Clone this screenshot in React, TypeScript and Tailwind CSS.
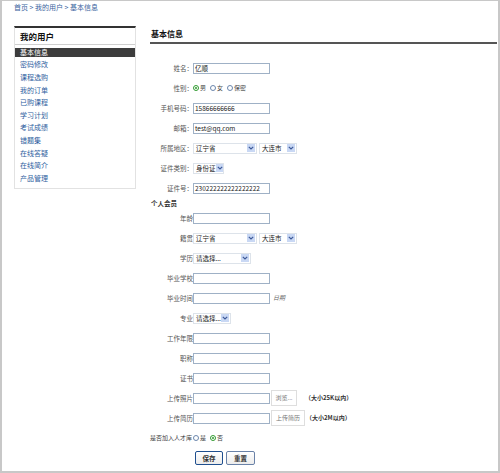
import React from "react";

const font = { fontFamily: '"Noto Sans CJK SC", "Noto Sans", sans-serif' };

function Input({ value = "", w = "w-[77px]" }: { value?: string; w?: string }) {
  return (
    <div className={`${w} h-[11px] border border-[#9fb1c6] bg-white flex items-center px-[1px] text-[6.5px] leading-none text-[#222] whitespace-nowrap overflow-hidden`}>
      {value}
    </div>
  );
}

function Select({ text, w }: { text: string; w: string }) {
  return (
    <div className={`${w} h-[11px] border border-[#dde3ea] bg-white flex items-center justify-between pl-[2px] pr-[1px] text-[6.5px] leading-none text-[#222] whitespace-nowrap overflow-hidden`}>
      <span className="whitespace-nowrap">{text}</span>
      <span className="w-[8px] h-[8px] shrink-0 bg-[#c9d8f4] flex items-center justify-center">
        <svg width="6" height="4" viewBox="0 0 6 4">
          <path d="M0.8 0.8 L3 3 L5.2 0.8" stroke="#3d5a99" strokeWidth="1.2" fill="none" />
        </svg>
      </span>
    </div>
  );
}

function Radio({ checked }: { checked?: boolean }) {
  return checked ? (
    <span className="w-[6px] h-[6px] rounded-full border border-[#2f9a2f] flex items-center justify-center bg-white">
      <span className="w-[2px] h-[2px] rounded-full bg-[#2f9a2f]" />
    </span>
  ) : (
    <span className="w-[6px] h-[6px] rounded-full border border-[#6b86ad] bg-white" />
  );
}

function Row({ label, children }: { label: string; children?: React.ReactNode }) {
  return (
    <div className="flex items-center h-[20px]">
      <div className="w-[43px] text-right text-[6.5px] leading-none text-[#555] whitespace-nowrap">{label}</div>
      <div className="flex items-center">{children}</div>
    </div>
  );
}

const menu = ["基本信息", "密码修改", "课程选购", "我的订单", "已购课程", "学习计划", "考试成绩", "错题集", "在线答疑", "在线简介", "产品管理"];

export default function App() {
  return (
    <div style={font} className="w-[500px] h-[473px] bg-white border-l-2 border-r-2 border-b-2 border-t border-[#c8c8c8] overflow-hidden">
      <div className="h-[12px] pl-[12px] text-[7px] leading-[12px] text-[#3a64a0]">
        首页 &gt; 我的用户 &gt; 基本信息
      </div>
      <div className="flex mt-[13px]">
        {/* sidebar */}
        <div className="ml-[12px] w-[122px] self-start border-t-2 border-[#333] border-l border-r border-b border-l-[#e2e2e2] border-r-[#e2e2e2] border-b-[#e2e2e2]">
          <div className="h-[17px] flex items-center pl-[5px] border-b border-[#cfcfcf] text-[8.5px] font-bold text-[#111]">我的用户</div>
          <div className="pt-[1px] pb-[3px]">
            {menu.map((m, i) => (
              <div key={m} className="h-[12.6px] flex items-center">
                {i === 0 ? (
                  <div className="w-full h-[9.5px] bg-[#3c3c3c] text-white text-[7px] leading-none flex items-center pl-[5px]">{m}</div>
                ) : (
                  <div className="text-[7px] leading-none text-[#2e5e9e] pl-[5px]">{m}</div>
                )}
              </div>
            ))}
          </div>
        </div>
        {/* main */}
        <div className="ml-[14px] w-[347px]">
          <div className="h-[16px] flex items-center text-[8px] font-bold text-[#111] pl-[1px]">基本信息</div>
          <div className="h-[2px] bg-[#555]" />
          <div className="pt-[14px]">
            <Row label="姓名："><Input value="亿顺" /></Row>
            <Row label="性别：">
              <div className="flex items-center gap-[1px] text-[6px] text-[#444] leading-none">
                <Radio checked /><span>男</span>
                <span className="w-[2px]" /><Radio /><span>女</span>
                <span className="w-[2px]" /><Radio /><span>保密</span>
              </div>
            </Row>
            <Row label="手机号码："><Input value="15866666666" /></Row>
            <Row label="邮箱："><Input value="test@qq.com" /></Row>
            <Row label="所属地区：">
              <div className="flex gap-[2px]"><Select text="辽宁省" w="w-[64px]" /><Select text="大连市" w="w-[38px]" /></div>
            </Row>
            <Row label="证件类别："><Select text="身份证" w="w-[31px]" /></Row>
            <Row label="证件号："><Input value="230222222222222222" /></Row>
            <div className="h-[10px] flex items-center text-[6.5px] font-bold text-[#333] leading-none pl-[1px]">个人会员</div>
            <Row label="年龄"><Input /></Row>
            <Row label="籍贯">
              <div className="flex gap-[2px]"><Select text="辽宁省" w="w-[64px]" /><Select text="大连市" w="w-[38px]" /></div>
            </Row>
            <Row label="学历"><Select text="请选择..." w="w-[58px]" /></Row>
            <Row label="毕业学校"><Input /></Row>
            <Row label="毕业时间">
              <Input />
              <span className="ml-[3px] text-[6px] italic text-[#666] leading-none">日期</span>
            </Row>
            <Row label="专业"><Select text="请选择..." w="w-[38px]" /></Row>
            <Row label="工作年限"><Input /></Row>
            <Row label="职称"><Input /></Row>
            <Row label="证书"><Input /></Row>
            <Row label="上传照片">
              <Input />
              <div className="ml-[1px] w-[26px] h-[16px] border border-[#dedede] bg-white flex items-center justify-center text-[6px] text-[#777] leading-none">浏览...</div>
              <span className="ml-[8px] text-[6px] font-bold text-[#333] leading-none">（大小25K以内）</span>
            </Row>
            <Row label="上传简历">
              <Input />
              <div className="ml-[1px] w-[34px] h-[16px] border border-[#dedede] bg-white flex items-center justify-center text-[6px] text-[#777] leading-none">上传简历</div>
              <span className="ml-[1px] text-[6px] font-bold text-[#333] leading-none">（大小2M以内）</span>
            </Row>
            <div className="h-[20px] flex items-center gap-[1px] text-[6px] text-[#444] leading-none">
              <span>是否加入人才库</span>
              <Radio /><span>是</span>
              <span className="w-[2px]" />
              <Radio checked /><span>否</span>
            </div>
            <div className="h-[20px] flex items-center pl-[45px] gap-[3px]">
              <div className="w-[28px] h-[14px] border border-[#1f4f8f] rounded-[2px] bg-gradient-to-b from-white to-[#ececec] flex items-center justify-center text-[6.5px] font-bold text-[#333] leading-none">保存</div>
              <div className="w-[29px] h-[14px] border border-[#6a82a8] rounded-[2px] bg-gradient-to-b from-white to-[#ececec] flex items-center justify-center text-[6.5px] font-bold text-[#333] leading-none">重置</div>
            </div>
          </div>
        </div>
      </div>
    </div>
  );
}
